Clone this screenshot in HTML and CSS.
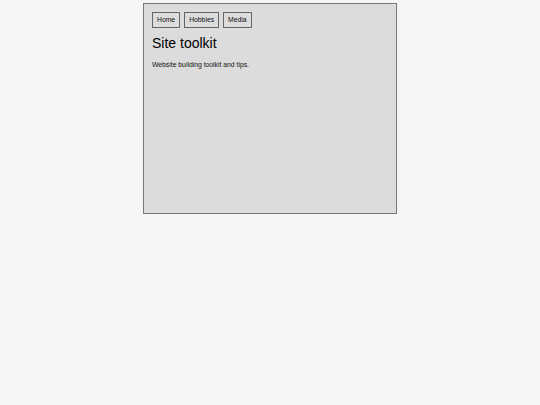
FILE: index.html
```html
<!DOCTYPE html>
<html>
<head>
<meta charset="utf-8">
<link rel="stylesheet" href="styles.css">
</head>
<body>
<div class="page">
  <nav class="nav">
    <a class="btn">Home</a>
    <a class="btn">Hobbies</a>
    <a class="btn">Media</a>
  </nav>
  <h1 class="title">Site toolkit</h1>
  <p class="desc">Website building toolkit and tips.</p>
</div>
</body>
</html>
```
FILE: styles.css
```css
html, body {
  margin: 0;
  padding: 0;
  background: #f5f5f5;
}
body {
  padding-top: 3px;
  font-family: "Liberation Sans", Arial, sans-serif;
  color: #111;
}
.page {
  box-sizing: border-box;
  width: 254px;
  height: 211px;
  margin: 0 auto;
  border: 1px solid #777;
  background: #dcdcdc;
  padding: 8px;
}
.nav {
  display: flex;
  gap: 4px;
}
.btn {
  box-sizing: border-box;
  height: 16px;
  padding: 0 4px;
  border: 1px solid #666;
  font-size: 6.8px;
  line-height: 14px;
  color: #111;
}
.title {
  margin: 7px 0 0 0;
  font-size: 14px;
  line-height: 16px;
  font-weight: normal;
  color: #000;
}
.desc {
  margin: 9px 0 0 0;
  font-size: 6.8px;
  line-height: 9px;
}
```
